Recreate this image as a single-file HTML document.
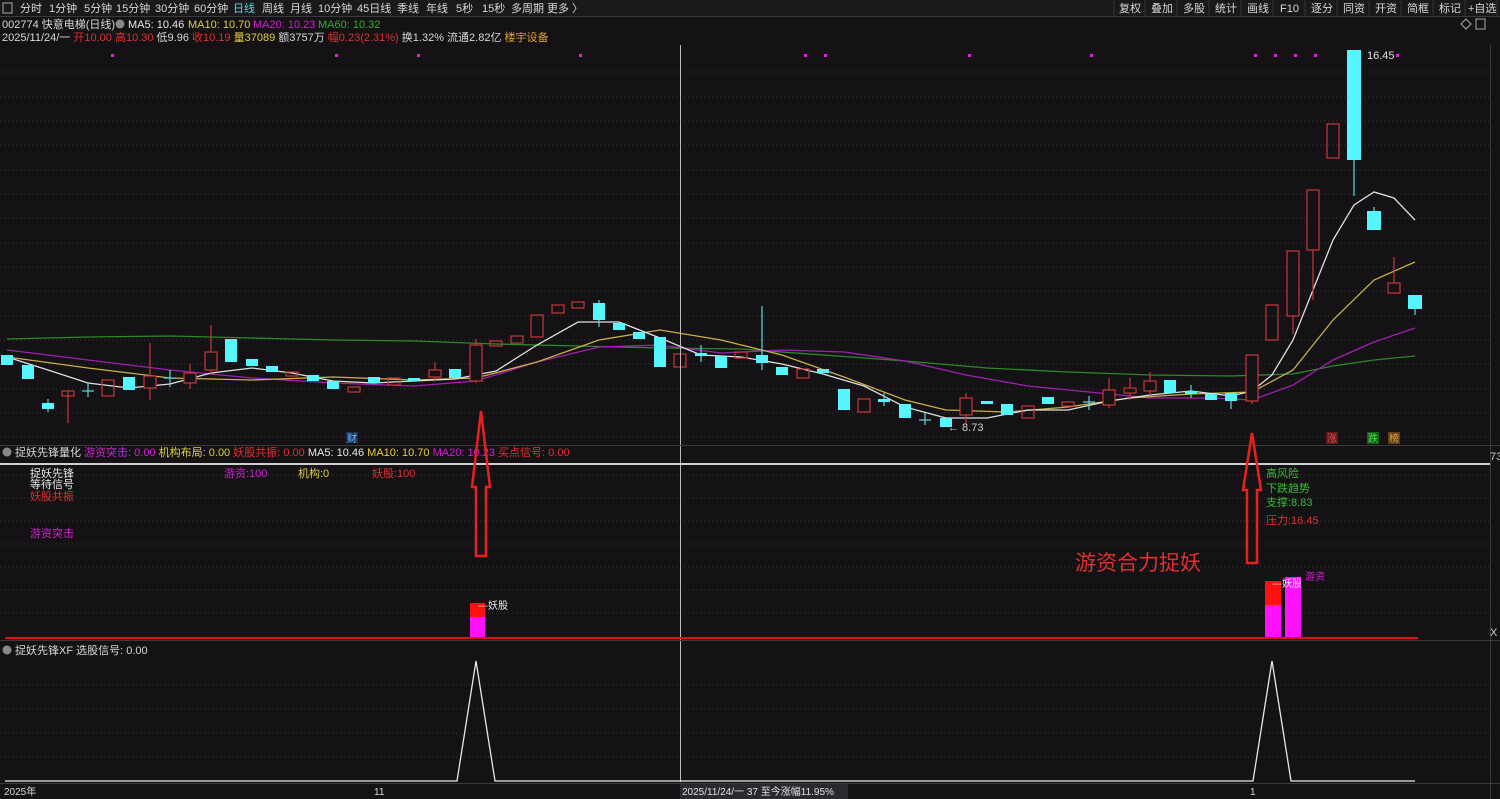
<!DOCTYPE html>
<html><head><meta charset="utf-8"><style>
html,body{margin:0;padding:0;background:#141214;}
body{width:1500px;height:799px;overflow:hidden;position:relative;font-family:"Liberation Sans","Noto Sans CJK SC",sans-serif;}
svg{position:absolute;left:0;top:0}
</style></head><body>
<svg width="1500" height="799" viewBox="0 0 1500 799" font-family="Liberation Sans, Noto Sans CJK SC, sans-serif">
<rect width="1500" height="799" fill="#141214"/>
<!-- top bar -->
<rect x="0" y="0" width="1500" height="16" fill="#1a181a"/>
<line x1="0" y1="16.5" x2="1500" y2="16.5" stroke="#3a3a3a"/>
<rect x="3" y="3" width="9" height="10" fill="none" stroke="#aaa"/>
<g font-size="11" fill="#d8d8d8">
<text x="20" y="12">分时</text><text x="49" y="12">1分钟</text><text x="84" y="12">5分钟</text><text x="116" y="12">15分钟</text><text x="155" y="12">30分钟</text><text x="194" y="12">60分钟</text>
<text x="233" y="12" fill="#5fd8e8">日线</text><text x="262" y="12">周线</text><text x="290" y="12">月线</text><text x="318" y="12">10分钟</text><text x="357" y="12">45日线</text><text x="397" y="12">季线</text><text x="426" y="12">年线</text><text x="456" y="12">5秒</text><text x="482" y="12">15秒</text><text x="511" y="12">多周期</text><text x="547" y="12">更多 〉</text>
</g>
<g stroke="#333"><line x1="1114" y1="0" x2="1114" y2="16"/><line x1="1145" y1="0" x2="1145" y2="16"/><line x1="1177" y1="0" x2="1177" y2="16"/><line x1="1209" y1="0" x2="1209" y2="16"/><line x1="1241" y1="0" x2="1241" y2="16"/><line x1="1273" y1="0" x2="1273" y2="16"/><line x1="1305" y1="0" x2="1305" y2="16"/><line x1="1337" y1="0" x2="1337" y2="16"/><line x1="1369" y1="0" x2="1369" y2="16"/><line x1="1401" y1="0" x2="1401" y2="16"/><line x1="1433" y1="0" x2="1433" y2="16"/><line x1="1465" y1="0" x2="1465" y2="16"/><line x1="1497" y1="0" x2="1497" y2="16"/></g>
<g font-size="11" fill="#d8d8d8">
<text x="1119" y="12">复权</text><text x="1151" y="12">叠加</text><text x="1183" y="12">多股</text><text x="1215" y="12">统计</text><text x="1247" y="12">画线</text><text x="1280" y="12">F10</text><text x="1311" y="12">逐分</text><text x="1343" y="12">同资</text><text x="1375" y="12">开资</text><text x="1407" y="12">简框</text><text x="1439" y="12">标记</text><text x="1468" y="12">+自选</text>
</g>
<!-- info lines -->
<g font-size="11">
<text x="2" y="28" fill="#d8d8d8">002774 快意电梯(日线)</text>
<circle cx="120" cy="24" r="4.5" fill="#888"/>
<text x="128" y="28" fill="#e8e8e8">MA5: 10.46</text>
<text x="188" y="28" fill="#e0d040">MA10: 10.70</text>
<text x="253" y="28" fill="#d020d0">MA20: 10.23</text>
<text x="318" y="28" fill="#30b030">MA60: 10.32</text>
<text x="2" y="41" fill="#d8d8d8">2025/11/24/一 <tspan fill="#e03030">开10.00</tspan> <tspan fill="#e03030">高10.30</tspan> 低9.96 <tspan fill="#e03030">收10.19</tspan> <tspan fill="#e0d040">量37089</tspan> 额3757万 <tspan fill="#e03030">幅0.23(2.31%)</tspan> 换1.32% 流通2.82亿 <tspan fill="#e0a030">楼宇设备</tspan></text>
</g>
<path d="M1466 19 l5 5 l-5 5 l-5 -5z" fill="none" stroke="#aaa"/>
<rect x="1476" y="19" width="9" height="10" fill="none" stroke="#aaa"/>
<!-- grid main -->
<g stroke="#3a3a3a" stroke-dasharray="1 3">
<line x1="0" y1="72" x2="1490" y2="72"/><line x1="0" y1="97" x2="1490" y2="97"/><line x1="0" y1="121" x2="1490" y2="121"/><line x1="0" y1="145" x2="1490" y2="145"/><line x1="0" y1="170" x2="1490" y2="170"/><line x1="0" y1="194" x2="1490" y2="194"/><line x1="0" y1="218" x2="1490" y2="218"/><line x1="0" y1="243" x2="1490" y2="243"/><line x1="0" y1="267" x2="1490" y2="267"/><line x1="0" y1="291" x2="1490" y2="291"/><line x1="0" y1="316" x2="1490" y2="316"/><line x1="0" y1="340" x2="1490" y2="340"/><line x1="0" y1="364" x2="1490" y2="364"/><line x1="0" y1="389" x2="1490" y2="389"/><line x1="0" y1="413" x2="1490" y2="413"/><line x1="0" y1="437" x2="1490" y2="437"/>
<line x1="0" y1="475" x2="1490" y2="475"/><line x1="0" y1="498" x2="1490" y2="498"/><line x1="0" y1="521" x2="1490" y2="521"/><line x1="0" y1="544" x2="1490" y2="544"/><line x1="0" y1="567" x2="1490" y2="567"/><line x1="0" y1="590" x2="1490" y2="590"/><line x1="0" y1="613" x2="1490" y2="613"/>
<line x1="0" y1="685" x2="1490" y2="685"/><line x1="0" y1="709" x2="1490" y2="709"/><line x1="0" y1="733" x2="1490" y2="733"/><line x1="0" y1="757" x2="1490" y2="757"/>
</g>
<line x1="1490.5" y1="45" x2="1490.5" y2="799" stroke="#3a3a3a"/>
<!-- magenta dots -->
<g fill="#e020e0">
<rect x="111" y="54" width="3" height="3"/><rect x="335" y="54" width="3" height="3"/><rect x="417" y="54" width="3" height="3"/><rect x="579" y="54" width="3" height="3"/><rect x="804" y="54" width="3" height="3"/><rect x="824" y="54" width="3" height="3"/><rect x="968" y="54" width="3" height="3"/><rect x="1090" y="54" width="3" height="3"/><rect x="1254" y="54" width="3" height="3"/><rect x="1274" y="54" width="3" height="3"/><rect x="1294" y="54" width="3" height="3"/><rect x="1314" y="54" width="3" height="3"/><rect x="1396" y="54" width="3" height="3"/>
</g>
<!-- MA lines -->
<g fill="none" stroke-width="1.3">
<polyline stroke="#2a8a2a" points="7,339 88,337 170,336 252,338 333,340 414,341 496,344 578,346 660,348 741,349 823,355 905,361 987,368 1068,372 1150,375 1231,376 1293,374 1333,366 1374,360 1415,356"/>
<polyline stroke="#a020b0" points="7,350 88,360 170,370 252,378 333,383 414,386 476,381 537,362 599,347 660,345 721,353 782,350 844,352 905,361 966,375 1028,386 1089,392 1150,398 1211,398 1252,400 1293,385 1333,360 1374,342 1415,328"/>
<polyline stroke="#c8b048" points="7,357 88,368 170,378 252,380 333,377 414,380 476,378 537,362 599,340 660,330 721,340 782,355 844,377 905,400 946,410 1007,412 1068,407 1130,398 1191,394 1252,392 1293,370 1333,320 1374,280 1415,262"/>
<polyline stroke="#e0e0e0" points="7,357 48,370 88,383 129,388 170,384 211,373 252,368 292,373 333,381 374,383 414,381 455,379 496,371 537,345 578,322 619,322 660,338 701,355 741,357 782,364 823,374 864,386 905,407 946,418 987,418 1028,410 1068,410 1109,401 1150,395 1191,391 1231,396 1252,391 1272,375 1293,340 1313,290 1333,240 1354,205 1374,192 1394,198 1415,220"/>
</g>
<!-- candles: up red hollow, down cyan filled -->
<g stroke="#c83838" fill="none" stroke-width="1.2">
<line x1="68" y1="391" x2="68" y2="423"/><rect x="62" y="391" width="12" height="5"/>
<rect x="102" y="380" width="12" height="16"/>
<line x1="150" y1="343" x2="150" y2="400"/><rect x="144" y="376" width="12" height="12" fill="#141214"/>
<line x1="190" y1="364" x2="190" y2="389"/><rect x="184" y="373" width="12" height="10" fill="#141214"/>
<line x1="211" y1="325" x2="211" y2="375"/><rect x="205" y="352" width="12" height="18" fill="#141214"/>
<rect x="286" y="372" width="12" height="4"/>
<rect x="348" y="387" width="12" height="5"/>
<rect x="388" y="378" width="12" height="7"/>
<line x1="435" y1="362" x2="435" y2="380"/><rect x="429" y="370" width="12" height="7" fill="#141214"/>
<line x1="476" y1="339" x2="476" y2="383"/><rect x="470" y="345" width="12" height="36" fill="#141214"/>
<rect x="490" y="341" width="12" height="5"/>
<rect x="511" y="336" width="12" height="7"/>
<rect x="531" y="315" width="12" height="22"/>
<rect x="552" y="305" width="12" height="8"/>
<rect x="572" y="302" width="12" height="6"/>
<rect x="674" y="354" width="12" height="13"/>
<rect x="735" y="352" width="12" height="6"/>
<rect x="797" y="369" width="12" height="9"/>
<rect x="858" y="399" width="12" height="13"/>
<line x1="966" y1="393" x2="966" y2="424"/><rect x="960" y="398" width="12" height="17" fill="#141214"/>
<rect x="1022" y="406" width="12" height="12"/>
<rect x="1062" y="402" width="12" height="4"/>
<line x1="1109" y1="378" x2="1109" y2="408"/><rect x="1103" y="390" width="12" height="15" fill="#141214"/>
<line x1="1130" y1="378" x2="1130" y2="400"/><rect x="1124" y="388" width="12" height="5" fill="#141214"/>
<line x1="1150" y1="372" x2="1150" y2="395"/><rect x="1144" y="381" width="12" height="10" fill="#141214"/>
<line x1="1252" y1="355" x2="1252" y2="404"/><rect x="1246" y="355" width="12" height="46" fill="#141214"/>
<rect x="1266" y="305" width="12" height="35"/>
<line x1="1293" y1="316" x2="1293" y2="334"/><rect x="1287" y="251" width="12" height="65" fill="#141214"/>
<line x1="1313" y1="250" x2="1313" y2="300"/><rect x="1307" y="190" width="12" height="60" fill="#141214"/>
<rect x="1327" y="124" width="12" height="34"/>
<line x1="1394" y1="257" x2="1394" y2="283"/><rect x="1388" y="283" width="12" height="10" fill="#141214"/>
</g>
<g stroke="#5cd8e0" stroke-width="1.2">
<line x1="48" y1="399" x2="48" y2="412"/><line x1="88" y1="382" x2="88" y2="397"/><line x1="82" y1="391" x2="94" y2="391"/>
<line x1="170" y1="370" x2="170" y2="387"/><line x1="164" y1="378" x2="176" y2="378"/>
<line x1="599" y1="300" x2="599" y2="327"/><line x1="701" y1="345" x2="701" y2="362"/>
<line x1="762" y1="306" x2="762" y2="370"/><line x1="884" y1="393" x2="884" y2="406"/>
<line x1="925" y1="413" x2="925" y2="425"/><line x1="919" y1="420" x2="931" y2="420"/>
<line x1="1089" y1="396" x2="1089" y2="410"/><line x1="1083" y1="402" x2="1095" y2="402"/>
<line x1="1231" y1="393" x2="1231" y2="409"/><line x1="1354" y1="160" x2="1354" y2="196"/><line x1="1374" y1="207" x2="1374" y2="212"/><line x1="1415" y1="295" x2="1415" y2="315"/>
<line x1="1191" y1="385" x2="1191" y2="398"/>
</g>
<g fill="#55f6ff">
<rect x="1" y="355" width="12" height="10"/><rect x="22" y="365" width="12" height="14"/><rect x="42" y="403" width="12" height="6"/>
<rect x="123" y="377" width="12" height="13"/><rect x="225" y="339" width="12" height="23"/><rect x="246" y="359" width="12" height="7"/><rect x="266" y="366" width="12" height="6"/>
<rect x="307" y="375" width="12" height="6"/><rect x="327" y="381" width="12" height="8"/><rect x="368" y="377" width="12" height="6"/><rect x="408" y="378" width="12" height="3"/><rect x="449" y="369" width="12" height="9"/>
<rect x="593" y="303" width="12" height="17"/><rect x="613" y="323" width="12" height="7"/><rect x="633" y="332" width="12" height="7"/><rect x="654" y="337" width="12" height="30"/>
<rect x="695" y="353" width="12" height="3"/><rect x="715" y="356" width="12" height="12"/><rect x="756" y="355" width="12" height="8"/><rect x="776" y="367" width="12" height="8"/><rect x="817" y="369" width="12" height="4"/>
<rect x="838" y="389" width="12" height="21"/><rect x="878" y="399" width="12" height="3"/><rect x="899" y="404" width="12" height="14"/><rect x="940" y="418" width="12" height="9"/>
<rect x="981" y="401" width="12" height="3"/><rect x="1001" y="404" width="12" height="11"/><rect x="1042" y="397" width="12" height="7"/>
<rect x="1164" y="380" width="12" height="13"/><rect x="1185" y="391" width="12" height="3"/><rect x="1205" y="394" width="12" height="6"/><rect x="1225" y="393" width="12" height="8"/>
<rect x="1347" y="50" width="14" height="110"/><rect x="1367" y="211" width="14" height="19"/><rect x="1408" y="295" width="14" height="14"/>
</g>
<text x="1367" y="59" font-size="11" fill="#e0e0e0">16.45</text>
<text x="948" y="431" font-size="11" fill="#d0d0d0">← 8.73</text>
<rect x="346" y="432" width="12" height="11" fill="#203050"/><text x="347" y="442" font-size="10" fill="#6ac0ff">财</text>
<rect x="1326" y="432" width="12" height="12" fill="#601818"/><text x="1327" y="442" font-size="10" fill="#e05050">涨</text>
<rect x="1367" y="432" width="12" height="12" fill="#186018"/><text x="1368" y="442" font-size="10" fill="#40e040">跌</text>
<rect x="1388" y="432" width="12" height="12" fill="#604018"/><text x="1389" y="442" font-size="10" fill="#e0a040">榜</text>
<!-- crosshair -->
<line x1="680.5" y1="45" x2="680.5" y2="782" stroke="#bbb"/>
<!-- indicator header -->
<line x1="0" y1="445.5" x2="1500" y2="445.5" stroke="#3a3a3a"/>
<line x1="0" y1="464" x2="1490" y2="464" stroke="#cfcfcf" stroke-width="2"/>
<circle cx="7" cy="452" r="4.5" fill="#888"/>
<g font-size="11">
<text x="15" y="456" fill="#d8d8d8">捉妖先锋量化 <tspan fill="#d020d0">游资突击: 0.00</tspan> <tspan fill="#e0d040">机构布局: 0.00</tspan> <tspan fill="#e03030">妖股共振: 0.00</tspan> <tspan fill="#e8e8e8">MA5: 10.46</tspan> <tspan fill="#e0d040">MA10: 10.70</tspan> <tspan fill="#d020d0">MA20: 10.23</tspan> <tspan fill="#e03030">买点信号: 0.00</tspan></text>
<text x="30" y="477" fill="#e8e8e8">捉妖先锋</text><text x="30" y="488" fill="#e8e8e8">等待信号</text><text x="30" y="500" fill="#e03030">妖股共振</text><text x="30" y="537" fill="#d020d0">游资突击</text>
<text x="224" y="477" fill="#d020d0">游资:100</text><text x="298" y="477" fill="#e0d040">机构:0</text><text x="372" y="477" fill="#e03030">妖股:100</text>
<text x="1266" y="477" fill="#30c030">高风险</text><text x="1266" y="492" fill="#30c030">下跌趋势</text><text x="1266" y="506" fill="#30c030">支撑:8.83</text><text x="1266" y="524" fill="#e03030">压力:16.45</text>
<text x="1490" y="460" fill="#ccc">73</text><text x="1490" y="636" fill="#ccc">X</text>
</g>
<text x="1075" y="570" font-size="21" fill="#e03030">游资合力捉妖</text>
<!-- indicator bars -->
<rect x="470" y="603" width="15" height="14" fill="#ff1010"/><rect x="470" y="617" width="15" height="21" fill="#ff10ff"/>
<text x="478" y="609" font-size="10" fill="#e8e8e8">---妖股</text>
<rect x="1265" y="581" width="16" height="24" fill="#ff1010"/><rect x="1265" y="605" width="16" height="33" fill="#ff10ff"/>
<rect x="1285" y="577" width="16" height="61" fill="#ff10ff"/>
<text x="1272" y="587" font-size="10" fill="#e8e8e8">---妖股</text><text x="1305" y="580" font-size="10" fill="#d020d0">游资</text>
<line x1="5" y1="638" x2="1418" y2="638" stroke="#e01010" stroke-width="2"/>
<!-- arrows -->
<g fill="none" stroke="#e82020" stroke-width="2.5">
<path d="M481 411 L490 487 L486 487 L486 556 L476 556 L476 487 L472 487 Z"/>
<path d="M1252 433 L1261 490 L1257 490 L1257 563 L1247 563 L1247 490 L1243 490 Z"/>
</g>
<!-- bottom panel -->
<line x1="0" y1="640.5" x2="1500" y2="640.5" stroke="#3a3a3a"/>
<circle cx="7" cy="650" r="4.5" fill="#888"/>
<text x="15" y="654" font-size="11" fill="#d8d8d8">捉妖先锋XF 选股信号: 0.00</text>
<polyline fill="none" stroke="#e8e8e8" stroke-width="1.3" points="5,781 457,781 476,661 495,781 1253,781 1272,661 1291,781 1415,781"/>
<line x1="0" y1="783.5" x2="1500" y2="783.5" stroke="#3a3a3a"/>
<g font-size="10" fill="#d8d8d8"><text x="4" y="795">2025年</text><text x="374" y="795">11</text><text x="1250" y="795">1</text></g>
<rect x="680" y="784" width="168" height="15" fill="#2a2a2e"/>
<text x="682" y="795" font-size="10" fill="#e0e0e0">2025/11/24/一 37 至今涨幅11.95%</text>
</svg>
</body></html>
